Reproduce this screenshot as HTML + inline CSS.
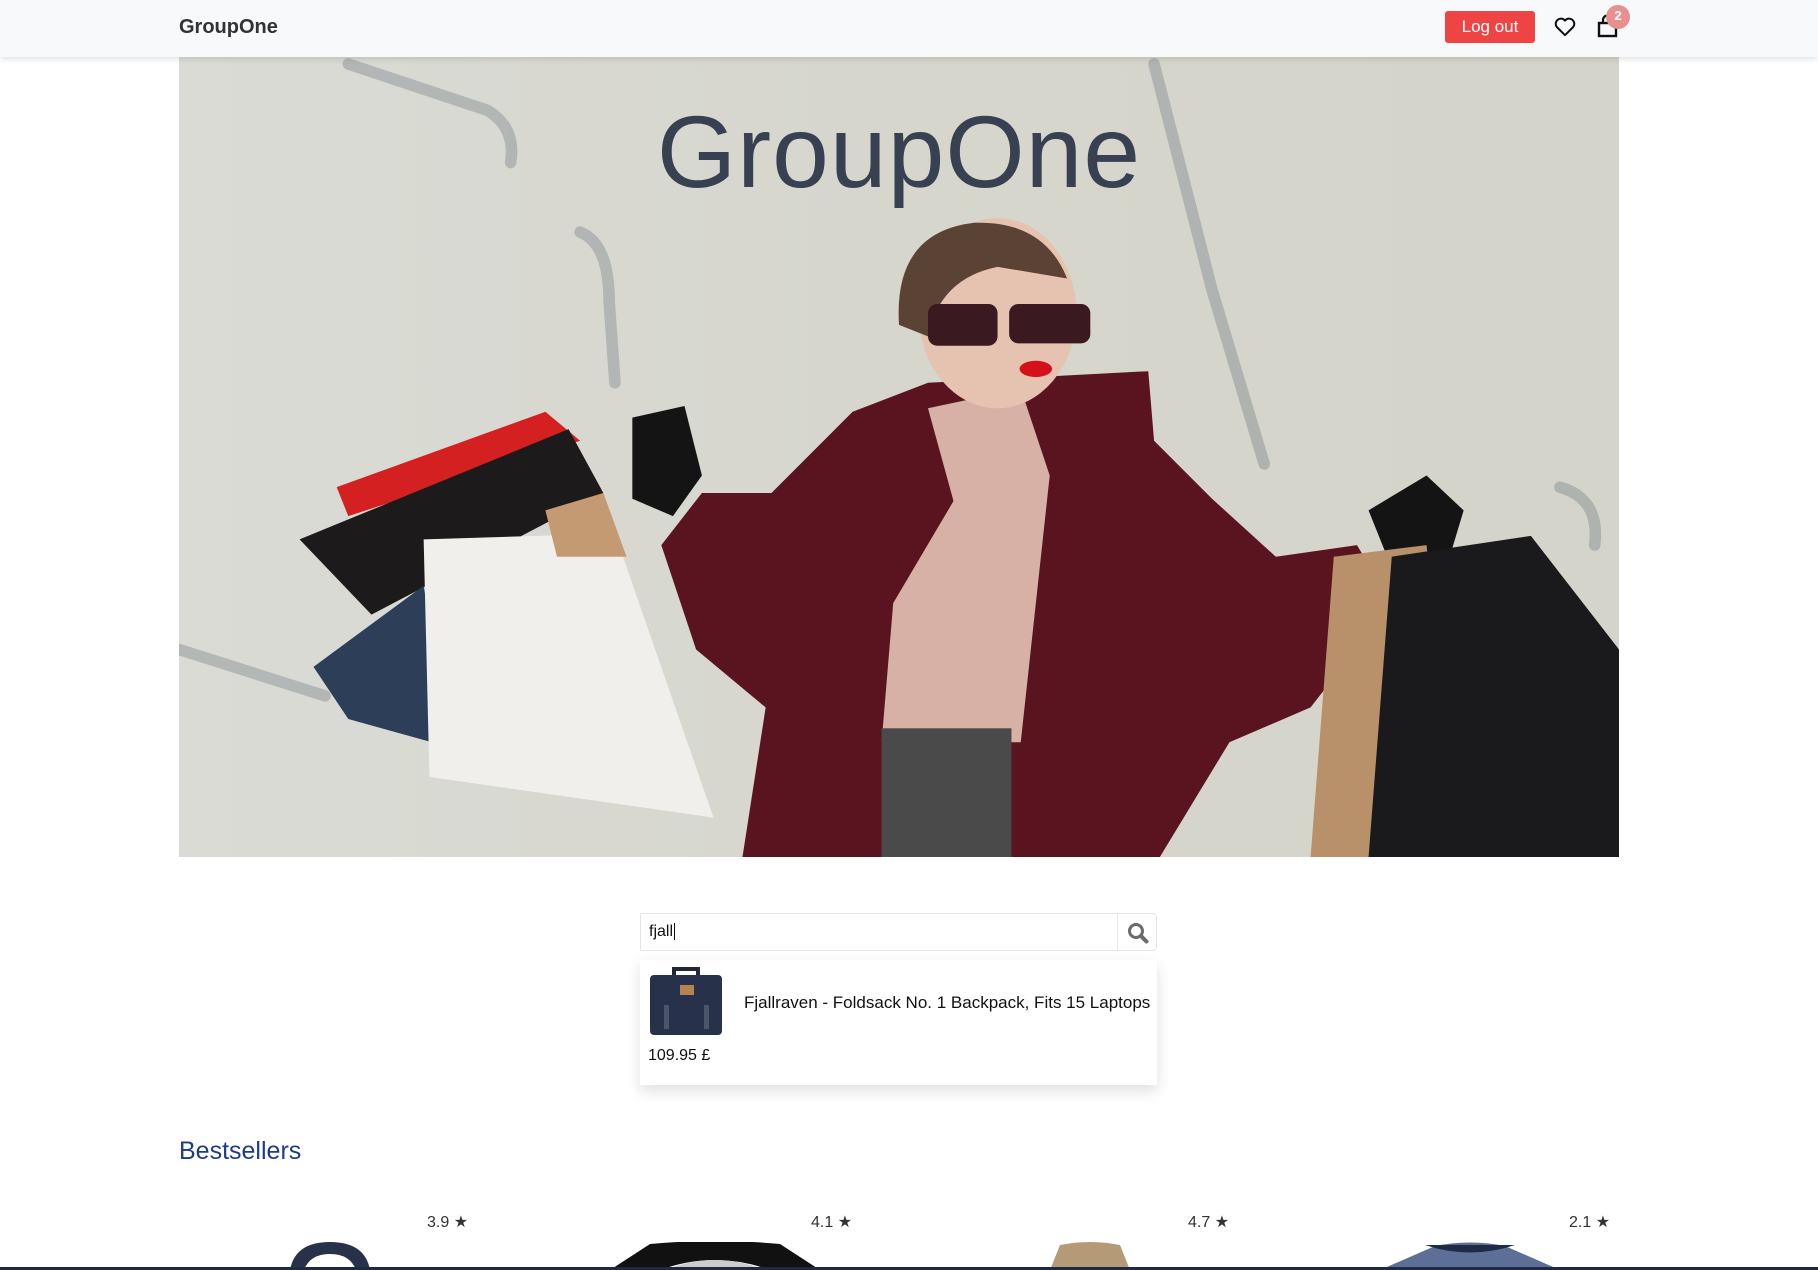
<!DOCTYPE html>
<html><head><meta charset="utf-8"><style>
*{margin:0;padding:0;box-sizing:border-box}
body{width:1818px;height:1270px;overflow:hidden;background:#fff;font-family:"Liberation Sans",sans-serif;position:relative}
.nav{position:absolute;left:0;top:0;width:1818px;height:57px;background:#f8f9fb;box-shadow:0 2px 6px rgba(0,0,0,.12);z-index:5}
.brand{position:absolute;left:179px;top:16px;font-size:20px;font-weight:bold;color:#333}
.btn{position:absolute;left:1445px;top:11px;width:90px;height:32px;background:#ef4444;border-radius:3px;color:#fff;font-size:17px;text-align:center;line-height:32px}
.badge{position:absolute;left:1606px;top:5px;width:24px;height:24px;border-radius:50%;background:#e88f8f;color:#fff;font-size:13px;font-weight:bold;text-align:center;line-height:22px}
.hero{position:absolute;left:179px;top:57px;width:1440px;height:800px;overflow:hidden}
.title{position:absolute;left:0;width:1440px;top:37px;text-align:center;font-size:102px;color:#374151;letter-spacing:1px}
.search{position:absolute;left:640px;top:913px;width:478px;height:38px;border:1px solid #e3e6ee;font-size:16px;padding:9px 8px;color:#111}
.sbtn{position:absolute;left:1117px;top:913px;width:40px;height:38px;border:1px solid #e3e6ee;border-radius:0 4px 4px 0}
.drop{position:absolute;left:640px;top:960px;width:517px;height:125px;background:#fff;box-shadow:0 6px 14px rgba(0,0,0,.13)}
.best{position:absolute;left:179px;top:1137px;font-size:25px;color:#1e3a8a}
.r{position:absolute;top:1212px;font-size:16px;color:#333}
.bar{position:absolute;left:0;top:1267px;width:1818px;height:3px;background:#1e2a44}
</style></head><body>
<div class="nav"><div class="brand">GroupOne</div><div class="btn">Log out</div>
<svg style="position:absolute;left:1554px;top:17px" width="22" height="20" viewBox="0 0 24 22"><path d="M12 20 L3 11 A5 5 0 0 1 12 4 A5 5 0 0 1 21 11 Z" fill="none" stroke="#111" stroke-width="2.2" stroke-linejoin="round"/></svg>
<svg style="position:absolute;left:1597px;top:14px" width="22" height="24" viewBox="0 0 22 24"><rect x="2" y="9" width="17" height="13" fill="none" stroke="#111" stroke-width="2.4"/><path d="M6 10 V6 A4.5 4.5 0 0 1 15 6 V10" fill="none" stroke="#111" stroke-width="2.2"/></svg>
<div class="badge">2</div></div>
<div class="hero">
<svg width="1440" height="800" viewBox="0 0 1242 690" preserveAspectRatio="none">
<defs><linearGradient id="bg" x1="0" y1="0" x2="1" y2="0"><stop offset="0" stop-color="#dadbd5"/><stop offset=".5" stop-color="#d6d6cd"/><stop offset="1" stop-color="#d4d4ca"/></linearGradient></defs>
<rect width="1242" height="690" fill="url(#bg)"/>
<g transform="translate(-154,-49)" fill="none" stroke="#5a6675" stroke-width="10" opacity=".3" stroke-linecap="round">
<path d="M300 55 L420 95 Q445 110 440 140"/><path d="M500 200 Q525 210 525 260 L530 330"/><path d="M995 55 L1045 250 L1090 400"/><path d="M1345 420 Q1380 430 1375 470"/><path d="M154 560 L280 600"/></g>
<g transform="translate(-154,-49)">
<polygon points="290,420 470,355 500,380 300,445" fill="#d42020"/>
<polygon points="258,465 490,370 520,425 320,530" fill="#1c1a1a"/>
<polygon points="270,575 365,505 390,645 300,620" fill="#2d3e58"/>
<polygon points="365,465 530,460 615,705 370,670" fill="#f0efeb"/>
<polygon points="470,440 520,425 540,480 480,480" fill="#c49a72"/>
<polygon points="735,355 800,330 990,320 995,380 1045,430 1100,480 1170,470 1200,520 1130,610 1060,640 1000,739 640,739 660,610 600,560 570,470 605,425 665,425 700,390" fill="#5a1420"/>
<polygon points="800,352 880,335 905,410 880,640 760,640 770,520 822,432" fill="#d7b1a6"/>
<rect x="760" y="628" width="112" height="111" fill="#4a4a4a"/>
<ellipse cx="860" cy="270" rx="68" ry="82" fill="#e6c2b0"/>
<path d="M775 280 Q770 200 840 192 Q900 190 920 240 L860 230 Q810 240 800 290 Z" fill="#5a4334"/>
<rect x="800" y="262" width="60" height="36" rx="8" fill="#3a1a20"/><rect x="870" y="262" width="70" height="34" rx="8" fill="#3a1a20"/>
<ellipse cx="893" cy="318" rx="14" ry="7" fill="#d4101a"/>
<path d="M545 360 L590 350 L605 410 L580 445 L545 430 Z" fill="#141414"/>
<path d="M1180 440 L1230 410 L1262 440 L1250 480 L1200 490 Z" fill="#141414"/>
<polygon points="1150,480 1230,470 1260,739 1130,739" fill="#b8916a"/>
<polygon points="1200,480 1320,462 1396,560 1396,739 1180,739" fill="#1a1a1c"/>
</g></svg>
<div class="title">GroupOne</div></div>
<div class="search">fjall<span style="border-left:1.5px solid #111;margin-left:1px"></span></div>
<div class="sbtn"><svg style="position:absolute;left:9px;top:8px" width="22" height="22" viewBox="0 0 22 22"><circle cx="9" cy="9" r="6.5" fill="none" stroke="#6b6b6b" stroke-width="3"/><path d="M14 14 L19.5 19.5" stroke="#6b6b6b" stroke-width="4" stroke-linecap="round"/></svg></div>
<div class="drop">
<svg style="position:absolute;left:8px;top:5px" width="76" height="72" viewBox="0 0 76 72"><path d="M26 10 V4 H50 V10" fill="none" stroke="#1f2738" stroke-width="4"/><rect x="2" y="10" width="72" height="60" rx="4" fill="#27324a"/><rect x="32" y="20" width="14" height="10" fill="#b48350"/><rect x="16" y="40" width="5" height="24" fill="#4a556a"/><rect x="56" y="40" width="5" height="24" fill="#4a556a"/></svg>
<div style="position:absolute;left:104px;top:33px;font-size:17px;color:#111">Fjallraven - Foldsack No. 1 Backpack, Fits 15 Laptops</div>
<div style="position:absolute;left:8px;top:87px;font-size:16px;color:#111">109.95 £</div></div>
<div class="best">Bestsellers</div>
<div class="r" style="left:427px">3.9 ★</div><div class="r" style="left:811px">4.1 ★</div><div class="r" style="left:1188px">4.7 ★</div><div class="r" style="left:1569px">2.1 ★</div>
<svg style="position:absolute;left:290px;top:1242px" width="80" height="28"><path d="M0 28 Q5 0 40 0 Q75 0 80 28 L66 28 Q60 12 40 12 Q20 12 14 28 Z" fill="#27324a"/></svg>
<svg style="position:absolute;left:610px;top:1242px" width="210" height="28"><path d="M0 28 L40 2 Q105 -4 170 2 L210 28 L160 28 Q105 8 50 28 Z" fill="#111"/><path d="M55 28 Q105 8 155 28 Z" fill="#ccc"/></svg>
<svg style="position:absolute;left:1045px;top:1242px" width="90" height="28"><path d="M5 28 L15 3 Q45 -3 75 3 L85 28 Z" fill="#b59a78"/></svg>
<svg style="position:absolute;left:1380px;top:1242px" width="180" height="28"><path d="M0 28 L55 4 Q90 -3 125 4 L180 28 Z" fill="#5d6f96"/><path d="M45 3 Q90 18 135 3 Z" fill="#1f2a44"/></svg>
<div class="bar"></div>
</body></html>
